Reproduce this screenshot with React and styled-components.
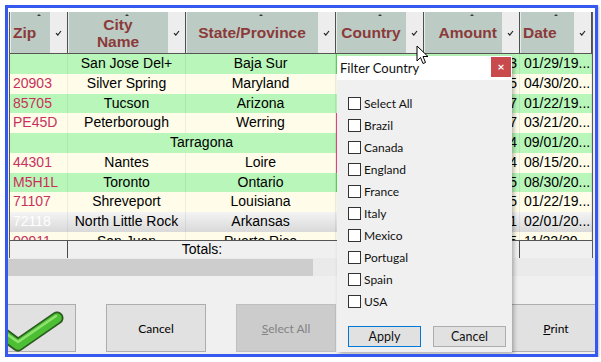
import React from "react";
import styled, { createGlobalStyle } from "styled-components";

const GlobalStyle = createGlobalStyle`
  html, body { margin: 0; padding: 0; background: #ffffff; }
  body { font-family: "Liberation Sans", Arial, sans-serif; }
`;

const COLS = "58px 118px 150px 88px 96px 72px";

const GREEN = "#b9f6b9";
const CREAM = "#fffde9";
const SELECTED = "linear-gradient(#f4f4f4, #d9d9d9)";

const rows = [
  { zip: "", city: "San Jose Del+", state: "Baja Sur", country: "Mexico", amount: "1,204.23", date: "01/29/19...", bg: GREEN, edge: "#5ad35a" },
  { zip: "20903", city: "Silver Spring", state: "Maryland", country: "USA", amount: "845.15", date: "04/30/20...", bg: CREAM },
  { zip: "85705", city: "Tucson", state: "Arizona", country: "USA", amount: "2,310.07", date: "01/22/19...", bg: GREEN },
  { zip: "PE45D", city: "Peterborough", state: "Werring", country: "England", amount: "612.47", date: "03/21/20...", bg: CREAM, edge: "#e04880" },
  { zip: "", merged: "Tarragona", country: "Spain", amount: "98.34", date: "09/01/20...", bg: GREEN, edge: "#e04880" },
  { zip: "44301", city: "Nantes", state: "Loire", country: "France", amount: "1,740.04", date: "08/15/20...", bg: CREAM, edge: "#e04880" },
  { zip: "M5H1L", city: "Toronto", state: "Ontario", country: "Canada", amount: "330.65", date: "08/30/20...", bg: GREEN, edge: "#5ad35a" },
  { zip: "71107", city: "Shreveport", state: "Louisiana", country: "USA", amount: "415.25", date: "01/22/19...", bg: CREAM },
  { zip: "72118", city: "North Little Rock", state: "Arkansas", country: "USA", amount: "2,006.31", date: "02/01/20...", bg: SELECTED, selected: true },
  { zip: "00911", city: "San Juan", state: "Puerto Rico", country: "USA", amount: "77.45", date: "11/22/20...", bg: CREAM },
];

const countries = ["Select All", "Brazil", "Canada", "England", "France", "Italy", "Mexico", "Portugal", "Spain", "USA"];

const Frame = styled.div`
  position: relative;
  box-sizing: border-box;
  margin: 5px 0 0 5px;
  width: 593px;
  height: 352px;
  border: 3px solid #3558ef;
  background: #f0f0f0;
  overflow: hidden;
  display: flex;
  flex-direction: column;
  box-shadow: 1px 1px 2px rgba(0, 0, 0, 0.25);
`;

const TopStrip = styled.div`
  flex: none;
  height: 4px;
  background: #ffffff;
`;

const Table = styled.div`
  flex: none;
  margin-left: 1px;
  width: 584px;
  box-sizing: border-box;
  border-left: 1px solid #5a5a5a;
  border-right: 1px solid #5a5a5a;
`;

const HeaderRow = styled.div`
  display: grid;
  grid-template-columns: ${COLS};
  height: 42px;
  box-sizing: border-box;
  background: #bccbc4;
  border-bottom: 1px solid #555;
`;

const HeaderCell = styled.div`
  position: relative;
  display: flex;
  align-items: stretch;
  box-sizing: border-box;
  border-right: 1px solid #4f4f4f;
  box-shadow: inset 1px 0 0 #e6ecea;
`;

const HeaderLabel = styled.div`
  flex: 1;
  display: flex;
  align-items: center;
  justify-content: ${(p) => p.$justify};
  padding: 0 ${(p) => (p.$justify === "flex-end" ? "5px" : "3px")};
  font-weight: bold;
  font-size: 15.5px;
  line-height: 17px;
  color: #8b3a3a;
  text-align: center;
  white-space: pre-line;
`;

const SortMark = styled.span`
  position: absolute;
  top: 2px;
  left: 50%;
  margin-left: -2px;
  width: 0;
  height: 0;
  border-left: 2px solid transparent;
  border-right: 2px solid transparent;
  border-bottom: 2px solid #3a3a3a;
`;

const FilterBtn = styled.div`
  flex: none;
  width: 17px;
  background: #ededed;
  display: flex;
  align-items: center;
  justify-content: center;
`;

const Body = styled.div`
  height: 186px;
  overflow: hidden;
  background: ${CREAM};
`;

const Row = styled.div`
  display: grid;
  grid-template-columns: ${COLS};
  height: 19.75px;
  background: ${(p) => p.$bg};
`;

const Cell = styled.div`
  grid-column: span ${(p) => p.$span || 1};
  box-sizing: border-box;
  padding: 0 ${(p) => p.$pad || "3px"};
  font-size: 14px;
  line-height: 19.75px;
  text-align: ${(p) => p.$align || "center"};
  color: ${(p) => p.$color || "#000"};
  white-space: nowrap;
  overflow: hidden;
  border-right: 1px solid rgba(0, 0, 0, 0.06);
  border-left: ${(p) => (p.$edge ? `1px solid ${p.$edge}` : "none")};
`;

const TotalsRow = styled.div`
  display: grid;
  grid-template-columns: ${COLS};
  height: 18px;
  box-sizing: border-box;
  border-top: 1px solid #555;
  background: #f0f0f0;
`;

const TotalsCell = styled.div`
  grid-column: span ${(p) => p.$span || 1};
  box-sizing: border-box;
  border-right: ${(p) => (p.$line ? "1px solid #4a4a4a" : "none")};
  font-size: 14px;
  line-height: 17px;
  text-align: center;
`;

const ScrollBar = styled.div`
  flex: none;
  display: flex;
  height: 18px;
  background: #eaeaea;
`;

const Thumb = styled.div`
  width: 305px;
  background: #cdcdcd;
  margin: 1px 0 0;
`;

const Spacer = styled.div`
  flex: none;
  height: 28px;
`;

const ButtonRow = styled.div`
  flex: none;
  display: flex;
  gap: 30px;
  margin-left: -32px;
  height: 48px;
`;

const BigButton = styled.div`
  flex: none;
  position: relative;
  width: 100px;
  height: 48px;
  margin-left: ${(p) => p.$shift || 0};
  box-sizing: border-box;
  border: 1px solid ${(p) => (p.$disabled ? "#bfbfbf" : "#adadad")};
  background: ${(p) => (p.$disabled ? "#cccccc" : "#e1e1e1")};
  color: ${(p) => (p.$disabled ? "#838383" : "#000")};
  font-family: Lato, "Open Sans", sans-serif;
  font-size: 12px;
  display: flex;
  align-items: center;
  justify-content: center;
  u { text-decoration: underline; }
`;

const Popup = styled.div`
  position: absolute;
  left: 329px;
  top: 48px;
  width: 175px;
  height: 296px;
  background: #f0f0f0;
  box-shadow: 2px 2px 4px rgba(0, 0, 0, 0.28);
  font-family: Lato, "Open Sans", sans-serif;
  display: flex;
  flex-direction: column;
`;

const TitleBar = styled.div`
  flex: none;
  height: 24px;
  background: #ffffff;
  display: flex;
  align-items: flex-start;
  justify-content: space-between;
`;

const Title = styled.span`
  padding-left: 3px;
  font-size: 13px;
  line-height: 24px;
  color: #111;
`;

const CloseBtn = styled.div`
  margin: 1px 1px 0 0;
  width: 20px;
  height: 20px;
  background: #c94a4d;
  color: #fff;
  font-size: 12px;
  font-weight: bold;
  line-height: 19px;
  text-align: center;
`;

const List = styled.div`
  padding: 12px 0 0 11px;
  display: flex;
  flex-direction: column;
`;

const Item = styled.div`
  height: 22px;
  display: flex;
  align-items: center;
  font-size: 12px;
  color: #111;
`;

const Box = styled.span`
  flex: none;
  width: 13px;
  height: 13px;
  margin-right: 3px;
  box-sizing: border-box;
  border: 1px solid #333;
  background: #fff;
`;

const PopupButtons = styled.div`
  display: flex;
  gap: 12px;
  padding: 14px 0 0 11px;
`;

const SmallButton = styled.div`
  width: 73px;
  height: 21px;
  box-sizing: border-box;
  border: 1px solid ${(p) => (p.$primary ? "#0078d7" : "#adadad")};
  background: #e1e1e1;
  font-size: 12.5px;
  line-height: 19px;
  text-align: center;
  color: #111;
`;

const Cursor = styled.svg`
  position: absolute;
  left: 408px;
  top: 37px;
`;

const CheckMark = () => (
  <svg width="100" height="48" viewBox="0 0 100 48" style={{ position: "absolute", left: 0, top: 0 }}>
    <polyline points="22,26 41,40 80,13" fill="none" stroke="#2b5b1f" strokeWidth="13" strokeLinecap="round" strokeLinejoin="round" />
    <polyline points="22,26 41,40 80,13" fill="none" stroke="#4cbf35" strokeWidth="9.5" strokeLinecap="round" strokeLinejoin="round" />
    <polyline points="24,25 41,37 79,11" fill="none" stroke="#8fe36f" strokeWidth="2.5" strokeLinecap="round" strokeLinejoin="round" />
  </svg>
);

const Tick = () => (
  <svg width="7" height="6" viewBox="0 0 7 6">
    <path d="M1 3.2 L2.8 5 L6 1" fill="none" stroke="#222" strokeWidth="1.2" />
  </svg>
);

const headers = [
  { label: "Zip", justify: "flex-start" },
  { label: "City\nName", justify: "center" },
  { label: "State/Province", justify: "center" },
  { label: "Country", justify: "center" },
  { label: "Amount", justify: "flex-end" },
  { label: "Date", justify: "flex-start" },
];

export default function App() {
  return (
    <>
      <GlobalStyle />
      <Frame>
        <TopStrip />
        <Table>
          <HeaderRow>
            {headers.map((h) => (
              <HeaderCell key={h.label}>
                <SortMark />
                <HeaderLabel $justify={h.justify}>{h.label}</HeaderLabel>
                <FilterBtn>
                  <Tick />
                </FilterBtn>
              </HeaderCell>
            ))}
          </HeaderRow>
          <Body>
            {rows.map((r, i) => (
              <Row key={i} $bg={r.bg}>
                <Cell $align="left" $color={r.selected ? "#ffffff" : "#c9305d"}>
                  {r.zip}
                </Cell>
                {r.merged ? (
                  <Cell $span={2}>{r.merged}</Cell>
                ) : (
                  <>
                    <Cell>{r.city}</Cell>
                    <Cell>{r.state}</Cell>
                  </>
                )}
                <Cell $edge={r.edge}>{r.country}</Cell>
                <Cell $align="right" $pad="2px">{r.amount}</Cell>
                <Cell $align="left" $pad="4px">{r.date}</Cell>
              </Row>
            ))}
          </Body>
          <TotalsRow>
            <TotalsCell $line />
            <TotalsCell $span={2}>Totals:</TotalsCell>
            <TotalsCell />
            <TotalsCell $line />
            <TotalsCell />
          </TotalsRow>
        </Table>
        <ScrollBar>
          <Thumb />
        </ScrollBar>
        <Spacer />
        <ButtonRow>
          <BigButton>
            <CheckMark />
          </BigButton>
          <BigButton>Cancel</BigButton>
          <BigButton $disabled>
            <span>
              <u>S</u>elect All
            </span>
          </BigButton>
          <BigButton>Export</BigButton>
          <BigButton $shift="10px">
            <span>
              <u>P</u>rint
            </span>
          </BigButton>
        </ButtonRow>

        <Popup>
          <TitleBar>
            <Title>Filter Country</Title>
            <CloseBtn>×</CloseBtn>
          </TitleBar>
          <List>
            {countries.map((c) => (
              <Item key={c}>
                <Box />
                <span>{c}</span>
              </Item>
            ))}
          </List>
          <PopupButtons>
            <SmallButton $primary>Apply</SmallButton>
            <SmallButton>Cancel</SmallButton>
          </PopupButtons>
        </Popup>

        <Cursor width="13" height="20" viewBox="0 0 13 20">
          <path d="M1 1 L1 16 L4.5 12.5 L7 18.5 L9.5 17.5 L7 11.5 L12 11.5 Z" fill="#fff" stroke="#000" strokeWidth="1" strokeLinejoin="round" />
        </Cursor>
      </Frame>
    </>
  );
}
